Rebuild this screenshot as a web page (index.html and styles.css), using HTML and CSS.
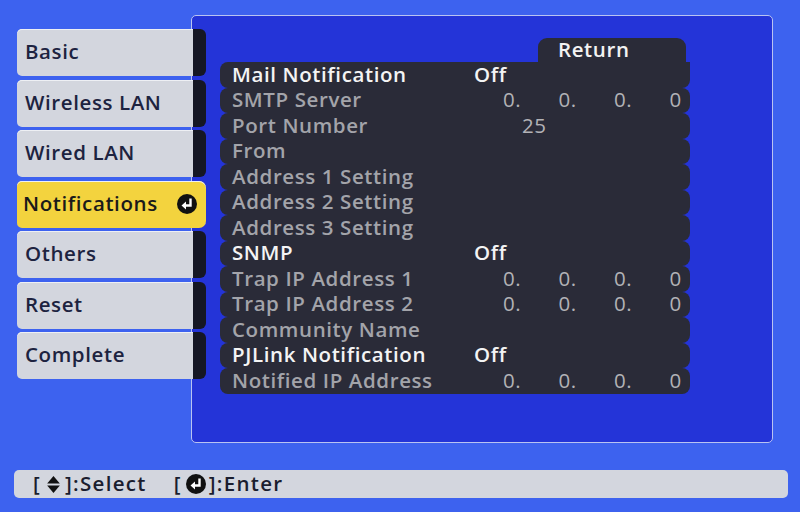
FILE: index.html
```html
<!DOCTYPE html>
<html>
<head>
<meta charset="utf-8">
<link rel="stylesheet" href="styles.css">
</head>
<body>
<div class="screen">
  <div class="main">
    <nav class="tabs">
      <div class="tab"><span class="tab-face">Basic</span><span class="tab-edge"></span></div>
      <div class="tab"><span class="tab-face">Wireless LAN</span><span class="tab-edge"></span></div>
      <div class="tab"><span class="tab-face">Wired LAN</span><span class="tab-edge"></span></div>
      <div class="tab active"><span class="tab-face">Notifications
        <svg class="enter-icon" viewBox="0 0 20 20" width="20" height="20"><circle cx="10" cy="10" r="10" fill="#111"/><path d="M13.5 4.5V11.5H8" fill="none" stroke="#fff" stroke-width="2.4"/><path d="M9 7.5L4.5 11.5L9 15.5Z" fill="#fff"/></svg>
      </span></div>
      <div class="tab"><span class="tab-face">Others</span><span class="tab-edge"></span></div>
      <div class="tab"><span class="tab-face">Reset</span><span class="tab-edge"></span></div>
      <div class="tab"><span class="tab-face">Complete</span><span class="tab-edge"></span></div>
    </nav>
    <section class="panel">
      <div class="return-line"><span class="return">Return</span></div>
      <div class="rows">
        <div class="row head"><span class="label">Mail Notification</span><span class="val">Off</span></div>
        <div class="row"><span class="label">SMTP Server</span><span class="ip"><span>0.</span><span>0.</span><span>0.</span><span>0</span></span></div>
        <div class="row"><span class="label">Port Number</span><span class="port">25</span></div>
        <div class="row"><span class="label">From</span></div>
        <div class="row"><span class="label">Address 1 Setting</span></div>
        <div class="row"><span class="label">Address 2 Setting</span></div>
        <div class="row"><span class="label">Address 3 Setting</span></div>
        <div class="row head"><span class="label">SNMP</span><span class="val">Off</span></div>
        <div class="row"><span class="label">Trap IP Address 1</span><span class="ip"><span>0.</span><span>0.</span><span>0.</span><span>0</span></span></div>
        <div class="row"><span class="label">Trap IP Address 2</span><span class="ip"><span>0.</span><span>0.</span><span>0.</span><span>0</span></span></div>
        <div class="row"><span class="label">Community Name</span></div>
        <div class="row head"><span class="label">PJLink Notification</span><span class="val">Off</span></div>
        <div class="row"><span class="label">Notified IP Address</span><span class="ip"><span>0.</span><span>0.</span><span>0.</span><span>0</span></span></div>
      </div>
    </section>
  </div>
  <footer class="hint">
    <span class="hint-item">[<svg class="sel-icon" viewBox="0 0 14 18" width="15" height="19"><path d="M7 1L13 8H1Z" fill="#111"/><path d="M1 10H13L7 17Z" fill="#111"/></svg>]:Select</span>
    <span class="hint-item">[<svg class="hint-enter" viewBox="0 0 20 20" width="20" height="20"><circle cx="10" cy="10" r="10" fill="#111"/><path d="M13.5 4.5V11.5H8" fill="none" stroke="#fff" stroke-width="2.4"/><path d="M9 7.5L4.5 11.5L9 15.5Z" fill="#fff"/></svg>]:Enter</span>
  </footer>
</div>
</body>
</html>
```
FILE: styles.css
```css
html, body {
  margin: 0;
  padding: 0;
}
body {
  width: 800px;
  height: 512px;
  overflow: hidden;
  background: #3d62ef;
  font-family: "Open Sans", "DejaVu Sans", sans-serif;
  font-weight: 600;
  font-size: 20.5px;
  letter-spacing: 0.6px;
}
.screen {
  display: flex;
  flex-direction: column;
  height: 512px;
}
.main {
  display: flex;
  align-items: flex-start;
  padding: 15px 0 0 17px;
}
.tabs {
  position: relative;
  z-index: 2;
  display: flex;
  flex-direction: column;
  gap: 3.5px;
  margin-top: 14px;
  width: 189px;
  flex: none;
}
.tab {
  display: flex;
  height: 47px;
}
.tab-face {
  display: flex;
  align-items: center;
  box-sizing: border-box;
  width: 176px;
  padding: 0 0 3px 8px;
  background: #d3d6de;
  color: #1d2340;
  border-radius: 5px 0 0 5px;
  box-shadow: inset 0 1px 0 #eef0f4;
}
.tab-edge {
  width: 13px;
  background: #151724;
  border-radius: 0 6px 6px 0;
}
.tab.active .tab-face {
  width: 189px;
  padding: 0 2px 3px 6px;
  background: #f3d33e;
  color: #1a1a1a;
  border-radius: 5px 7px 7px 5px;
  justify-content: space-between;
}
.enter-icon {
  margin: 3px 7px 0 0;
}
.panel {
  margin-left: -15px;
  border: 1px solid #b9c3f2;
  border-radius: 5px;
  background: #2434d8;
  padding: 22px 0 0 28px;
  box-sizing: content-box;
  width: 552px;
  height: 404px;
}
.return-line {
  display: flex;
  justify-content: flex-end;
  width: 466px;
}
.return {
  box-sizing: border-box;
  width: 148px;
  height: 24px;
  line-height: 22px;
  padding-left: 20px;
  color: #f2f2f2;
  background: #2a2b38;
  border-radius: 9px 9px 0 0;
}
.rows {
  display: flex;
  flex-direction: column;
  width: 470px;
}
.row {
  display: flex;
  align-items: center;
  box-sizing: border-box;
  height: 25.5px;
  padding: 0 0 2px 12px;
  background: #2a2b38;
  border-radius: 8px;
  color: #a3a4aa;
  white-space: nowrap;
}
.row:first-child {
  border-top-right-radius: 0;
}
.row.head {
  color: #f4f4f4;
}
.label {
  width: 242px;
  flex: none;
}
.val {
  color: #f4f4f4;
}
.port {
  padding-left: 48px;
  color: #b2b2b6;
  font-weight: 500;
}
.ip {
  display: flex;
  padding-left: 29px;
  color: #b2b2b6;
  font-weight: 500;
}
.ip span {
  width: 55.5px;
}
.ip span:last-child {
  width: auto;
}
.hint {
  display: flex;
  align-items: center;
  gap: 27px;
  margin: 27px 0 0 14px;
  width: 755px;
  height: 28px;
  padding: 0 0 2px 19px;
  box-sizing: content-box;
  height: 26px;
  background: #d3d6de;
  border-radius: 5px;
  color: #1a1d2e;
  letter-spacing: 1.3px;
}
.hint-item {
  display: flex;
  align-items: center;
}
.sel-icon {
  margin: 2px 4px 0 5px;
}
.hint-enter {
  margin: 2px 3px 0 4px;
}
```
